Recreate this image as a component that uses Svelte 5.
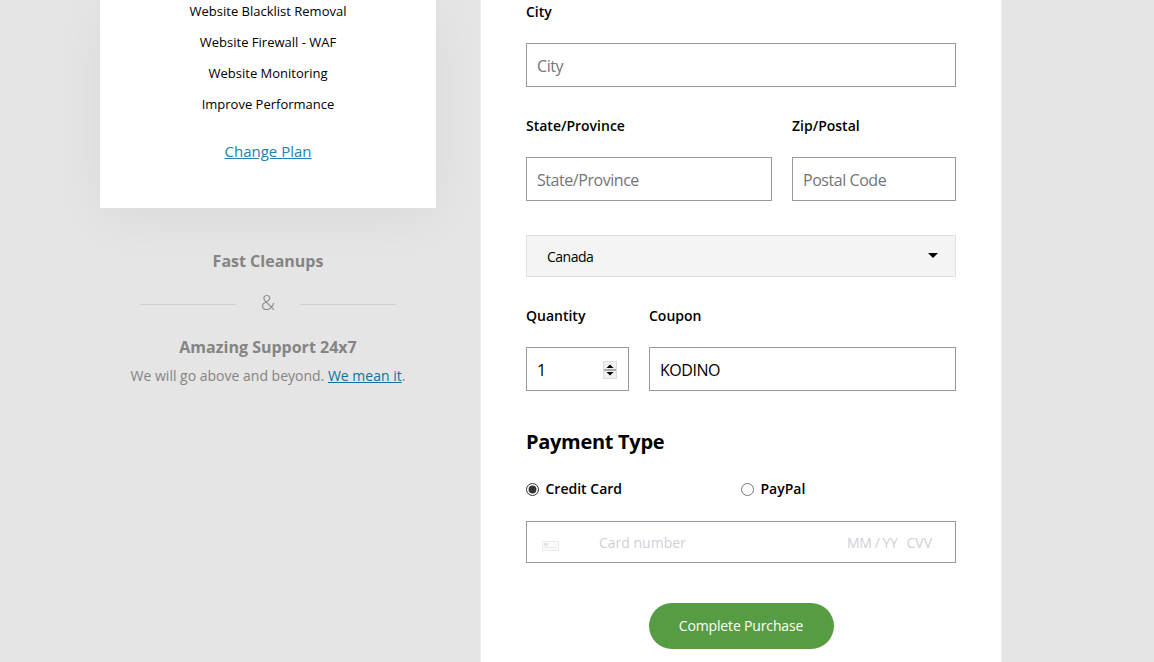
<script>
  const features = [
    "Website Blacklist Removal",
    "Website Firewall - WAF",
    "Website Monitoring",
    "Improve Performance"
  ];
</script>

<div class="page">
  <aside class="side">
    <div class="plan">
      <ul>
        {#each features as item}
          <li>{item}</li>
        {/each}
      </ul>
      <a href="#plan" class="change">Change Plan</a>
    </div>
    <div class="promise">
      <h4>Fast Cleanups</h4>
      <div class="amp"><span></span><em>&amp;</em><span></span></div>
      <h4>Amazing Support 24x7</h4>
      <p>We will go above and beyond. <a href="#support">We mean it</a>.</p>
    </div>
  </aside>

  <main class="panel">
    <form>
      <div class="field">
        <label for="city">City</label>
        <input id="city" type="text" placeholder="City" />
      </div>
      <div class="row state">
        <div class="field">
          <label for="state">State/Province</label>
          <input id="state" type="text" placeholder="State/Province" />
        </div>
        <div class="field">
          <label for="zip">Zip/Postal</label>
          <input id="zip" type="text" placeholder="Postal Code" />
        </div>
      </div>
      <div class="select">
        <select>
          <option>Canada</option>
        </select>
      </div>
      <div class="row qty">
        <div class="field number">
          <label for="qty">Quantity</label>
          <input id="qty" type="number" value="1" />
          <svg class="spin" width="14" height="18" viewBox="0 0 14 18">
            <rect x="0.5" y="0.5" width="13" height="17" fill="#f0f0f0" stroke="#dcdcdc" />
            <rect x="1" y="8" width="12" height="2" fill="#a8a8a8" />
            <path d="M7 3.5 L10.5 7 L3.5 7 Z" fill="#000" />
            <path d="M3.5 11 L10.5 11 L7 14.5 Z" fill="#000" />
          </svg>
        </div>
        <div class="field">
          <label for="coupon">Coupon</label>
          <input id="coupon" type="text" value="KODINO" />
        </div>
      </div>
      <h3>Payment Type</h3>
      <div class="row radios">
        <label><input type="radio" name="pay" checked /> Credit Card</label>
        <label><input type="radio" name="pay" /> PayPal</label>
      </div>
      <div class="card">
        <svg width="17" height="10" viewBox="0 0 17 10">
          <rect x="0.5" y="0.5" width="16" height="9" fill="#fafafb" stroke="#ebebee" />
          <rect x="2" y="2" width="4" height="3" fill="#e2e2e7" />
          <rect x="2" y="6" width="12" height="1" fill="#ebebef" />
        </svg>
        <span class="num">Card number</span>
        <span class="exp">MM / YY</span>
        <span class="cvv">CVV</span>
      </div>
      <div class="submit">
        <button type="button">Complete Purchase</button>
      </div>
    </form>
  </main>
</div>

<style>
  :global(body) {
    background: #e5e5e5;
    font-family: "Open Sans", sans-serif;
    color: #000;
  }

  .page {
    display: flex;
    height: 662px;
    overflow: hidden;
    padding-left: 100px;
    gap: 45px;
    align-items: flex-start;
    box-sizing: border-box;
  }

  .side {
    width: 336px;
    flex: none;
  }

  .plan {
    background: #fff;
    height: 208px;
    box-sizing: border-box;
    text-align: center;
    box-shadow: 0 10px 50px rgba(0, 0, 0, 0.05);
  }

  ul {
    list-style: none;
    margin: 0;
    padding: 0;
    font-size: 13px;
    line-height: 31px;
    transform: translateY(-4px);
  }

  .change {
    display: inline-block;
    margin-top: 15px;
    font-size: 15px;
    line-height: 24px;
    color: #2483a8;
  }

  .promise {
    text-align: center;
    color: #848484;
    padding-top: 41px;
  }

  h4 {
    margin: 0;
    font-size: 16px;
    line-height: 24px;
    font-weight: 700;
  }

  .amp {
    display: flex;
    align-items: center;
    justify-content: center;
    height: 38px;
    margin: 12px 0;
  }

  .amp span {
    width: 96px;
    height: 1px;
    background: #d0d0d0;
  }

  .amp em {
    width: 64px;
    padding-bottom: 4px;
    font-style: normal;
    font-size: 20px;
    font-weight: 300;
  }

  .promise p {
    margin: 7px 0 0;
    font-size: 14px;
    line-height: 20px;
  }

  .promise p a {
    color: #0f7299;
  }

  .panel {
    width: 520px;
    flex: none;
    height: 662px;
    box-sizing: border-box;
    background: #fff;
    box-shadow: 0 0 0 1px #ebebeb;
    padding: 0 45px;
  }

  form {
    display: flex;
    flex-direction: column;
  }

  .field {
    display: flex;
    flex-direction: column;
    min-width: 0;
  }

  .field label {
    font-size: 14px;
    font-weight: 600;
    line-height: 24px;
    margin-bottom: 19px;
  }

  .field input {
    height: 44px;
    box-sizing: border-box;
    width: 100%;
    border: 1px solid #999;
    border-radius: 0;
    padding: 2px 10px 0;
    font-family: inherit;
    font-size: 16px;
    letter-spacing: -0.45px;
    color: #000;
    background: #fff;
    outline: none;
    appearance: textfield;
  }

  .number {
    position: relative;
  }

  .spin {
    position: absolute;
    left: 77px;
    top: 57px;
  }

  input[type="number"]::-webkit-inner-spin-button {
    appearance: none;
    display: none;
  }

  .row {
    display: grid;
    gap: 20px;
  }

  .state {
    grid-template-columns: 246px 164px;
    margin-top: 27px;
  }

  .select {
    position: relative;
    margin-top: 34px;
  }

  .select::after {
    content: "";
    position: absolute;
    right: 18px;
    top: 18px;
    border-left: 5px solid transparent;
    border-right: 5px solid transparent;
    border-top: 5px solid #000;
  }

  select {
    display: block;
    width: 100%;
    height: 42px;
    appearance: none;
    border: 1px solid #e0e0e0;
    border-radius: 0;
    background: #f4f4f4;
    padding: 0 20px;
    font-family: inherit;
    font-size: 14px;
    letter-spacing: -0.5px;
    color: #000;
  }

  .qty {
    grid-template-columns: 103px 307px;
    margin-top: 27px;
  }

  h3 {
    margin: 37px 0 0;
    font-size: 20px;
    line-height: 28px;
    font-weight: 700;
    letter-spacing: -0.3px;
  }

  .radios {
    grid-template-columns: 215px 215px;
    gap: 0;
    margin-top: 21px;
  }

  .radios label {
    display: flex;
    align-items: center;
    gap: 6.5px;
    font-size: 14px;
    font-weight: 600;
    line-height: 24px;
  }

  .radios input {
    margin: 0;
    width: 13px;
    height: 13px;
    accent-color: #333;
  }

  .card {
    display: flex;
    align-items: center;
    height: 42px;
    box-sizing: border-box;
    margin-top: 20px;
    border: 1px solid #999;
    padding: 0 23px 0 15px;
    font-size: 14px;
    color: #d0d0d8;
  }

  .card svg {
    margin-top: 7px;
  }

  .num {
    margin-left: 40px;
    flex: 1;
  }

  .exp {
    letter-spacing: -0.4px;
  }

  .cvv {
    margin-left: 9px;
  }

  .submit {
    display: flex;
    justify-content: center;
    margin-top: 40px;
  }

  button {
    width: 185px;
    height: 46px;
    border: 0;
    border-radius: 23px;
    padding: 0 0 1px;
    background: #569c43;
    color: #fff;
    font-family: inherit;
    font-size: 14px;
    letter-spacing: -0.15px;
  }
</style>
